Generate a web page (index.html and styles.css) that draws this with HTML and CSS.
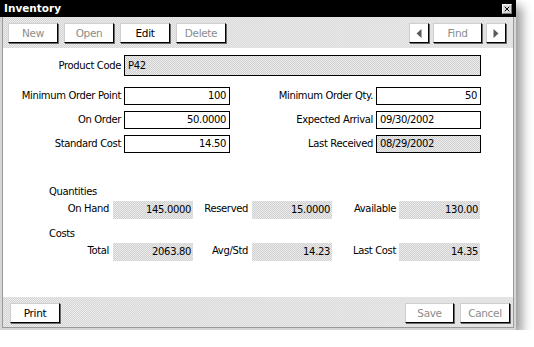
FILE: index.html
```html
<!DOCTYPE html>
<html>
<head>
<meta charset="utf-8">
<link rel="stylesheet" href="styles.css">
</head>
<body>
<div class="window">
  <div class="titlebar">
    <span class="title">Inventory</span>
    <span class="close"><svg width="8" height="8" viewBox="0 0 8 8"><path d="M1 1L7 7M7 1L1 7" stroke="#000" stroke-width="1.3"/></svg></span>
  </div>
  <div class="frame">
    <div class="toolbar">
      <div class="group">
        <div class="btn dis">New</div>
        <div class="btn dis">Open</div>
        <div class="btn">Edit</div>
        <div class="btn dis">Delete</div>
      </div>
      <div class="group nav">
        <div class="btn arrow"><svg width="6" height="9" viewBox="0 0 6 9"><path d="M5.5 0V9L0.5 4.5Z" fill="#5a5a5a"/></svg></div>
        <div class="btn dis find">Find</div>
        <div class="btn arrow"><svg width="6" height="9" viewBox="0 0 6 9"><path d="M0.5 0V9L5.5 4.5Z" fill="#5a5a5a"/></svg></div>
      </div>
    </div>
    <div class="content">
      <div class="form">
        <div class="lbl top">Product Code</div>
        <div class="field ro wide">P42</div>

        <div class="lbl">Minimum Order Point</div>
        <div class="field num">100</div>
        <div class="lbl">Minimum Order Qty.</div>
        <div class="field num">50</div>

        <div class="lbl">On Order</div>
        <div class="field num">50.0000</div>
        <div class="lbl">Expected Arrival</div>
        <div class="field">09/30/2002</div>

        <div class="lbl">Standard Cost</div>
        <div class="field num">14.50</div>
        <div class="lbl">Last Received</div>
        <div class="field ro">08/29/2002</div>
      </div>

      <div class="totals">
        <div class="head">Quantities</div>
        <div class="trow">
          <div class="tl">On Hand</div>
          <div class="tv">145.0000</div>
          <div class="tl">Reserved</div>
          <div class="tv">15.0000</div>
          <div class="tl">Available</div>
          <div class="tv">130.00</div>
        </div>
        <div class="head costs">Costs</div>
        <div class="trow">
          <div class="tl">Total</div>
          <div class="tv">2063.80</div>
          <div class="tl">Avg/Std</div>
          <div class="tv">14.23</div>
          <div class="tl">Last Cost</div>
          <div class="tv">14.35</div>
        </div>
      </div>
    </div>
    <div class="footer">
      <div class="btn">Print</div>
      <div class="group">
        <div class="btn dis">Save</div>
        <div class="btn dis">Cancel</div>
      </div>
    </div>
  </div>
</div>
</body>
</html>
```

FILE: styles.css
```css
body {
  margin: 0;
  background: #fff;
  font-family: "DejaVu Sans", "Liberation Sans", sans-serif;
  font-size: 10px;
  letter-spacing: -0.35px;
  color: #000;
}

.window {
  width: 516px;
  height: 330px;
  display: flex;
  flex-direction: column;
  background: #fff;
  box-shadow: 6px 6px 10px rgba(0, 0, 0, 0.4);
}

.titlebar {
  height: 17px;
  flex: none;
  background: #000;
  display: flex;
  justify-content: space-between;
  align-items: flex-start;
}

.title {
  color: #fff;
  font-weight: bold;
  font-size: 10.5px;
  letter-spacing: 0;
  line-height: 17px;
  padding-left: 4px;
}

.close {
  margin: 4px 4px 0 0;
  width: 10px;
  height: 10px;
  background: #d8d8d8;
  border: 1px solid #f4f4f4;
  border-right-color: #777;
  border-bottom-color: #777;
  box-sizing: border-box;
  display: flex;
  align-items: center;
  justify-content: center;
}

.close svg {
  width: 6px;
  height: 6px;
}

.frame {
  flex: 1;
  display: flex;
  flex-direction: column;
  border: 2px solid #d6d6d6;
  border-top: 0;
  box-shadow: inset 1px 0 0 #9a9a9a, inset -1px 0 0 #9a9a9a, inset 0 -1px 0 #9a9a9a;
  padding: 0 1px 1px 1px;
}

.toolbar,
.footer {
  height: 31px;
  flex: none;
  box-sizing: border-box;
  display: flex;
  justify-content: space-between;
  align-items: flex-start;
  background:
    linear-gradient(to right, rgba(228, 228, 228, 0.2) 0%, rgba(228, 228, 228, 0.9) 100%),
    repeating-conic-gradient(#cecece 0 25%, #f0f0f0 0 50%) 0 0 / 2px 2px;
}

.toolbar {
  padding: 6px 7px 0 5px;
}

.footer {
  height: 30px;
  padding: 6px 3px 0 7px;
}

.group {
  display: flex;
  gap: 6px;
}

.nav {
  gap: 4px;
}

.btn {
  width: 50px;
  height: 20px;
  box-sizing: border-box;
  background: #fff;
  border: 1px solid #cfcfcf;
  border-right-color: #000;
  border-bottom-color: #000;
  box-shadow: 1px 1px 0 #6a6a6a;
  display: flex;
  align-items: center;
  justify-content: center;
  font-size: 10.5px;
  color: #000;
}

.btn.dis {
  color: #8c8c8c;
}

.btn.arrow {
  width: 20px;
}

.btn.find {
  width: 49px;
}

.footer .btn.dis:first-child {
  width: 49px;
}

.content {
  flex: 1;
  background: #fff;
  padding-top: 7px;
}

.form {
  display: grid;
  grid-template-columns: 118px 106px 140px 105px;
  grid-template-rows: 26px 18px 18px 18px;
  column-gap: 3px;
  row-gap: 6px;
}

.lbl {
  text-align: right;
  line-height: 18px;
  white-space: nowrap;
}

.lbl.top {
  line-height: 21px;
}

.field {
  height: 18px;
  box-sizing: border-box;
  border: 1px solid #000;
  background: #fff;
  line-height: 16px;
  padding: 0 3px;
  white-space: nowrap;
}

.field.num {
  text-align: right;
}

.field.ro {
  background: repeating-conic-gradient(#d0d0d0 0 25%, #ebebeb 0 50%) 0 0 / 2px 2px;
}

.field.wide {
  grid-column: 2 / 5;
  height: 21px;
  line-height: 19px;
}

.totals {
  margin-top: 33px;
}

.head {
  line-height: 12px;
  padding-left: 46px;
}

.head.costs {
  margin-top: 9px;
}

.trow {
  display: grid;
  grid-template-columns: 110px 80px 59px 80px 67px 81px;
  height: 18px;
  margin-top: 3px;
}

.tl {
  text-align: right;
  padding-right: 4px;
  line-height: 15px;
  white-space: nowrap;
}

.tl:nth-child(5) {
  padding-right: 3px;
}

.tv {
  text-align: right;
  padding-right: 2px;
  line-height: 18px;
  background: repeating-conic-gradient(#d0d0d0 0 25%, #ebebeb 0 50%) 0 0 / 2px 2px;
}
```
